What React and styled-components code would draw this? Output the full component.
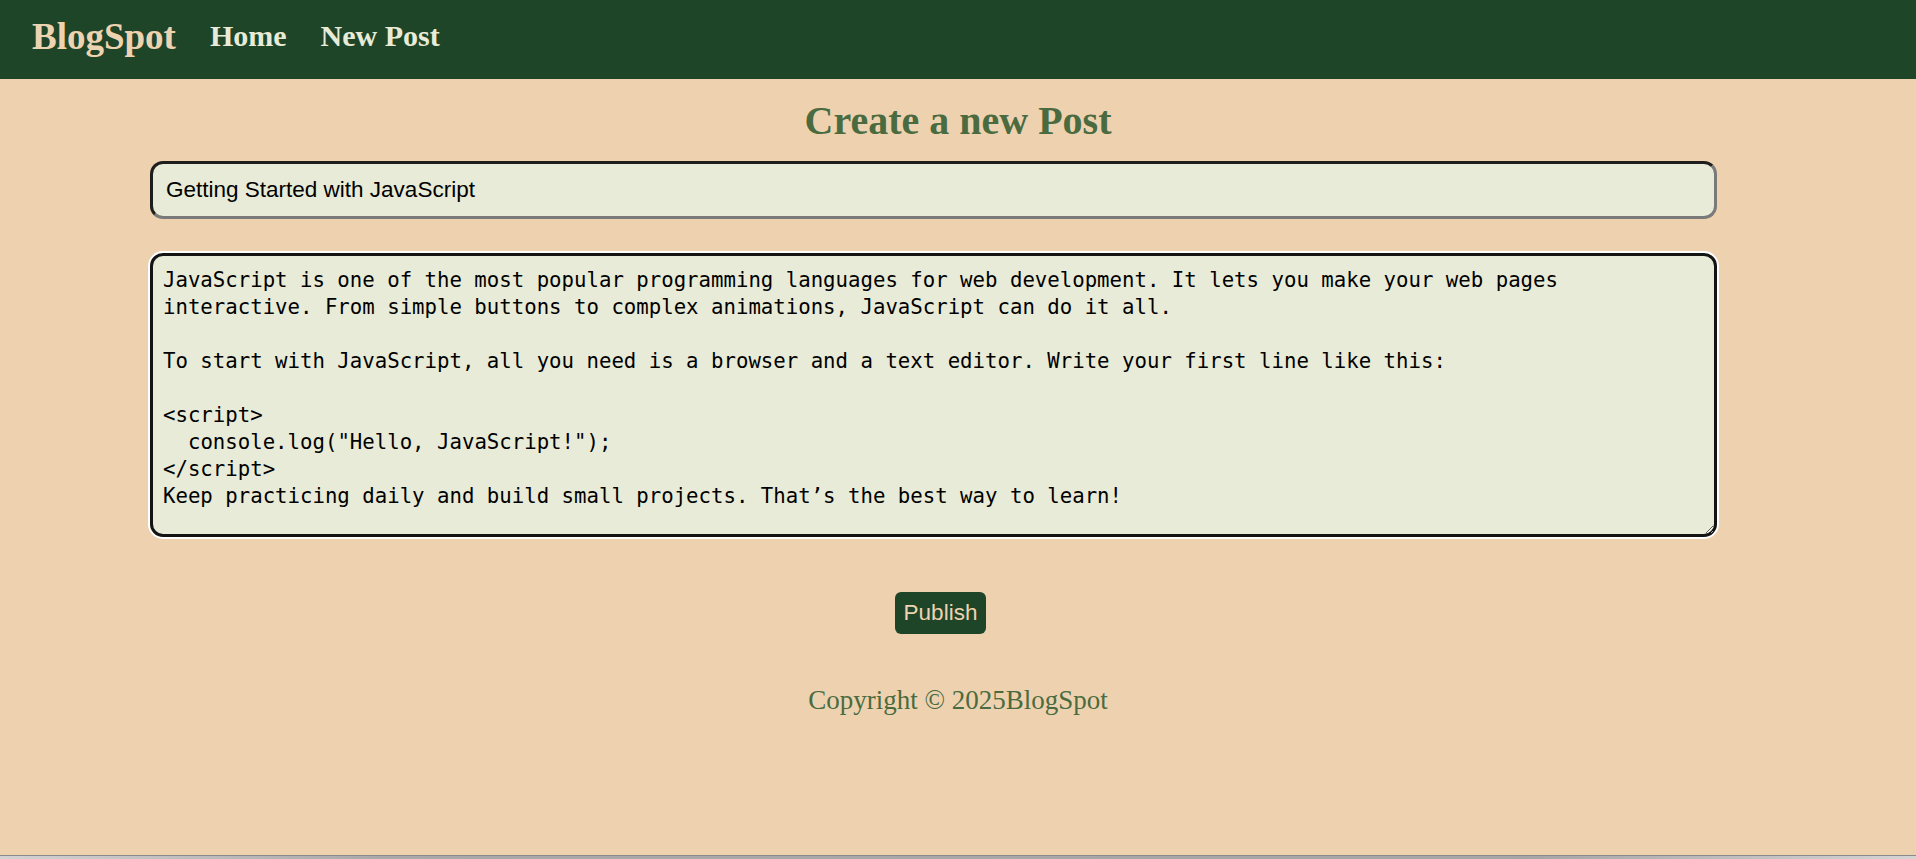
import React, { useState } from "react";
import styled, { createGlobalStyle } from "styled-components";

const GlobalStyle = createGlobalStyle`
  html, body {
    margin: 0;
    padding: 0;
    background: #eed2b0;
  }
  body {
    font-family: "Liberation Serif", "Times New Roman", serif;
  }
  * { box-sizing: border-box; }
`;

const Page = styled.div`
  min-height: 100vh;
  display: flex;
  flex-direction: column;
  background: #eed2b0;
`;

const NavBar = styled.nav`
  height: 79px;
  padding: 0 32px 7px;
  background: #1f4529;
  display: flex;
  align-items: center;
  gap: 34px;
`;

const Logo = styled.a`
  font-family: "Liberation Serif", "Times New Roman", serif;
  font-weight: bold;
  font-size: 37px;
  color: #eed3b1;
  text-decoration: none;
`;

const NavLink = styled.a`
  font-family: "Liberation Serif", "Times New Roman", serif;
  font-weight: bold;
  font-size: 30px;
  color: #e8ebd7;
  text-decoration: none;
`;

const Main = styled.main`
  display: flex;
  flex-direction: column;
`;

const Title = styled.h1`
  margin: 17.5px 0;
  text-align: center;
  font-family: "Liberation Serif", "Times New Roman", serif;
  font-weight: bold;
  font-size: 40px;
  color: #4a6b3f;
`;

const Form = styled.form`
  display: flex;
  flex-direction: column;
  width: 1567px;
  margin-left: 150px;
`;

const TitleInput = styled.input`
  width: 100%;
  padding: 13px 12px 13px 13px;
  font-family: "Liberation Sans", Arial, sans-serif;
  font-size: 22.5px;
  color: #000;
  background: #e8ebd7;
  border: 3px solid;
  border-color: #1e1e1e #7a7a7a #7a7a7a #1e1e1e;
  border-radius: 13px;
  outline: none;
`;

const BodyArea = styled.textarea`
  margin-top: 34px;
  width: 100%;
  height: 284px;
  padding: 11px 40px 10px 10px;
  font-family: "DejaVu Sans Mono", "Liberation Mono", monospace;
  font-size: 20.7px;
  line-height: 27px;
  color: #000;
  background: #e8ebd7;
  border: 3px solid #141414;
  border-radius: 13px;
  box-shadow: 0 0 0 2px #ffffff;
  outline: none;
  resize: vertical;
`;

const PublishButton = styled.button`
  align-self: center;
  margin: 55px 0 0 14px;
  padding: 8px 9px;
  font-family: "Liberation Sans", Arial, sans-serif;
  font-size: 22.5px;
  line-height: 26px;
  color: #eed3b1;
  background: #1f4529;
  border: none;
  border-radius: 6px;
  cursor: pointer;
`;

const Footer = styled.footer`
  margin-top: 51px;
  text-align: center;
  font-family: "Liberation Serif", "Times New Roman", serif;
  font-size: 27px;
  color: #4a6b3f;
`;

const WindowEdge = styled.div`
  margin-top: auto;
  height: 4px;
  background:
    linear-gradient(to bottom, #8b8b8b 0 1px, transparent 1px),
    linear-gradient(to right, #d2d2d2, #a9a9a9 20%, #a6a6a6 80%, #d4d4d4);
`;

const initialBody =
  "JavaScript is one of the most popular programming languages for web development. It lets you make your web pages interactive. From simple buttons to complex animations, JavaScript can do it all.\n\n" +
  "To start with JavaScript, all you need is a browser and a text editor. Write your first line like this:\n\n" +
  "<script>\n  console.log(\"Hello, JavaScript!\");\n</script>\n" +
  "Keep practicing daily and build small projects. That\u2019s the best way to learn!";

export default function App() {
  const [title, setTitle] = useState("Getting Started with JavaScript");
  const [body, setBody] = useState(initialBody);

  return (
    <>
      <GlobalStyle />
      <Page>
        <NavBar>
          <Logo href="#">BlogSpot</Logo>
          <NavLink href="#">Home</NavLink>
          <NavLink href="#">New Post</NavLink>
        </NavBar>
        <Main>
          <Title>Create a new Post</Title>
          <Form onSubmit={(e) => e.preventDefault()}>
            <TitleInput
              type="text"
              value={title}
              onChange={(e) => setTitle(e.target.value)}
            />
            <BodyArea value={body} onChange={(e) => setBody(e.target.value)} />
            <PublishButton type="submit">Publish</PublishButton>
          </Form>
          <Footer>Copyright © 2025BlogSpot</Footer>
        </Main>
        <WindowEdge />
      </Page>
    </>
  );
}
